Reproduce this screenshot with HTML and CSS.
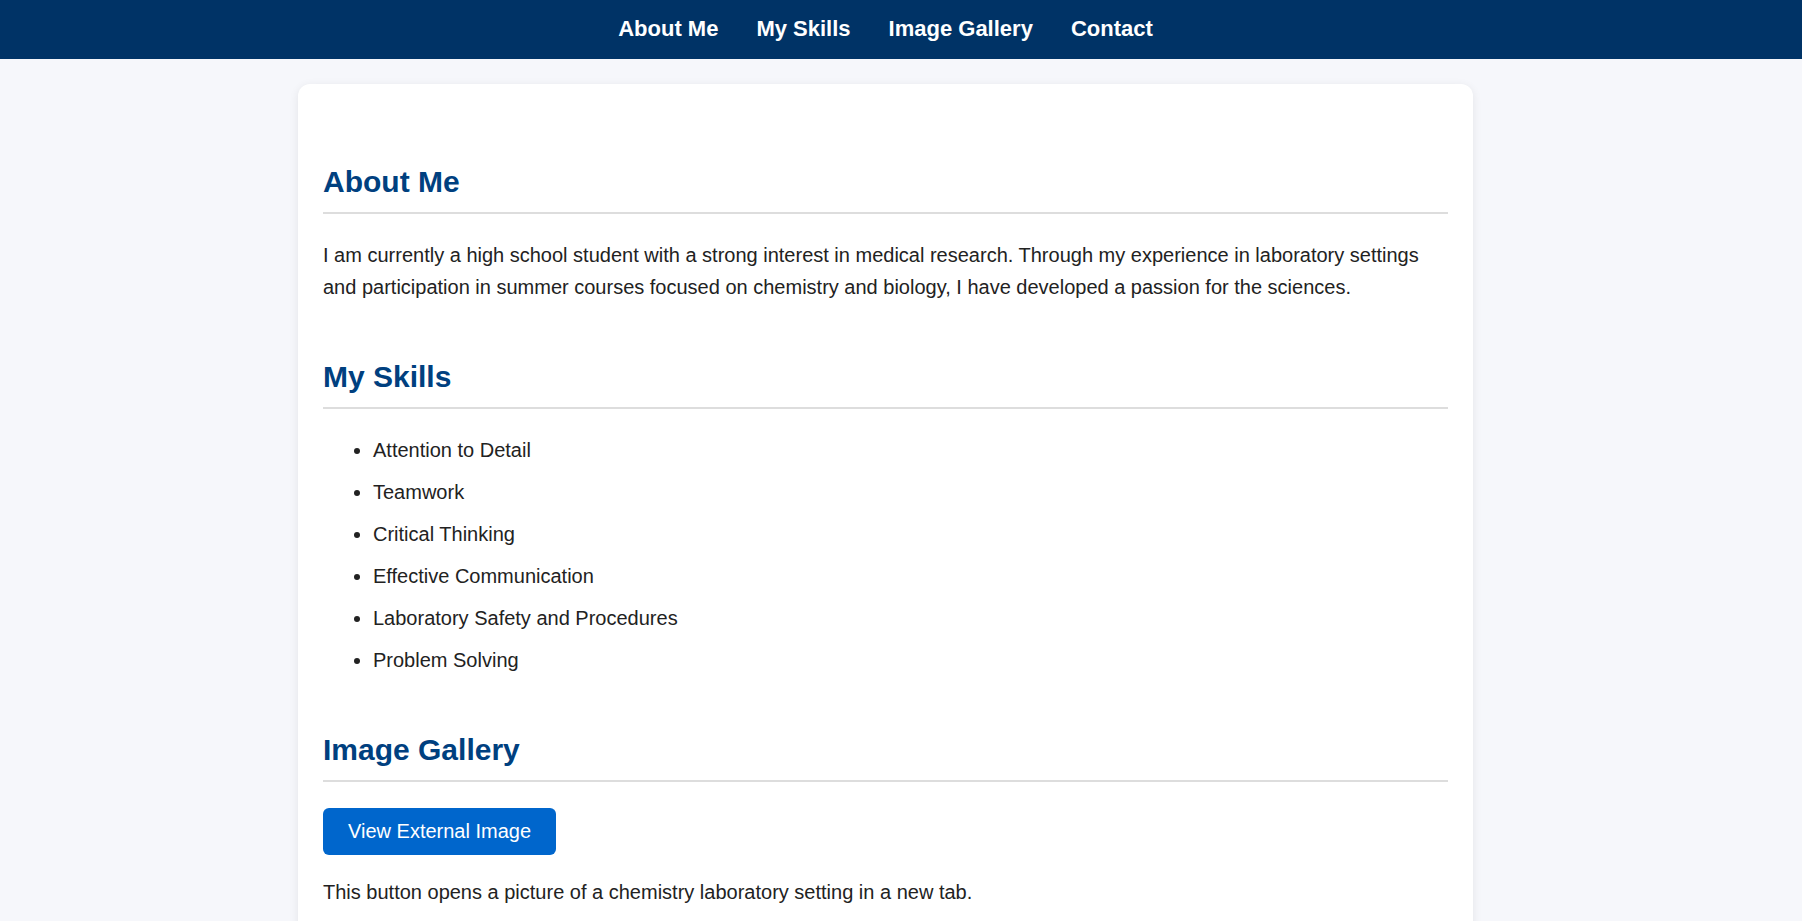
FILE: index.html
```html
<!DOCTYPE html>
<html lang="en">
<head>
<meta charset="utf-8">
<title>Portfolio</title>
<link rel="stylesheet" href="styles.css">
</head>
<body>
<header class="site-header">
  <nav class="nav">
    <a class="nav-link" href="#about">About Me</a>
    <a class="nav-link" href="#skills">My Skills</a>
    <a class="nav-link" href="#gallery">Image Gallery</a>
    <a class="nav-link" href="#contact">Contact</a>
  </nav>
</header>
<main class="page">
  <div class="card">
    <section class="section" id="about">
      <h2 class="section-title">About Me</h2>
      <p class="text">I am currently a high school student with a strong interest in medical research. Through my experience in laboratory settings and participation in summer courses focused on chemistry and biology, I have developed a passion for the sciences.</p>
    </section>
    <section class="section" id="skills">
      <h2 class="section-title">My Skills</h2>
      <ul class="skills">
        <li>Attention to Detail</li>
        <li>Teamwork</li>
        <li>Critical Thinking</li>
        <li>Effective Communication</li>
        <li>Laboratory Safety and Procedures</li>
        <li>Problem Solving</li>
      </ul>
    </section>
    <section class="section" id="gallery">
      <h2 class="section-title">Image Gallery</h2>
      <div class="actions"><a class="button" href="#gallery">View External Image</a></div>
      <p class="text note">This button opens a picture of a chemistry laboratory setting in a new tab.</p>
    </section>
  </div>
</main>
</body>
</html>
```

FILE: styles.css
```css
* { box-sizing: border-box; }

html, body {
  margin: 0;
  padding: 0;
}

body {
  background: #f6f7fb;
  color: #222;
  font-family: "Liberation Sans", Arial, sans-serif;
  font-size: 20px;
  line-height: 1.6;
}

.site-header {
  background: #003366;
}

.nav {
  display: flex;
  justify-content: center;
  gap: 38px;
  padding: 16px 31px 17px 0;
}

.nav-link {
  color: #ffffff;
  text-decoration: none;
  font-weight: bold;
  font-size: 22px;
  line-height: 26px;
}

.page {
  padding: 25px 31px 40px 0;
}

.card {
  max-width: 1175px;
  margin: 0 auto;
  background: #ffffff;
  border-radius: 12px;
  box-shadow: 0 2px 10px rgba(0, 0, 0, 0.08);
  padding: 24px 25px 40px;
}

.section {
  margin-top: 56px;
}

.section-title {
  margin: 0 0 25px;
  color: #00407f;
  font-size: 30px;
  line-height: 36px;
  font-weight: bold;
  padding-bottom: 12px;
  border-bottom: 2px solid #dddddd;
}

.text {
  margin: 0;
}

.skills {
  margin: 0;
  padding-left: 50px;
}

.skills li + li {
  margin-top: 10px;
}

.actions {
  margin-top: 26px;
  line-height: 0;
}

.button {
  display: inline-block;
  background: #0066cc;
  color: #ffffff;
  text-decoration: none;
  font-size: 20px;
  line-height: 23px;
  padding: 12px 25px;
  border-radius: 6px;
}

.note {
  margin-top: 21px;
}
```
